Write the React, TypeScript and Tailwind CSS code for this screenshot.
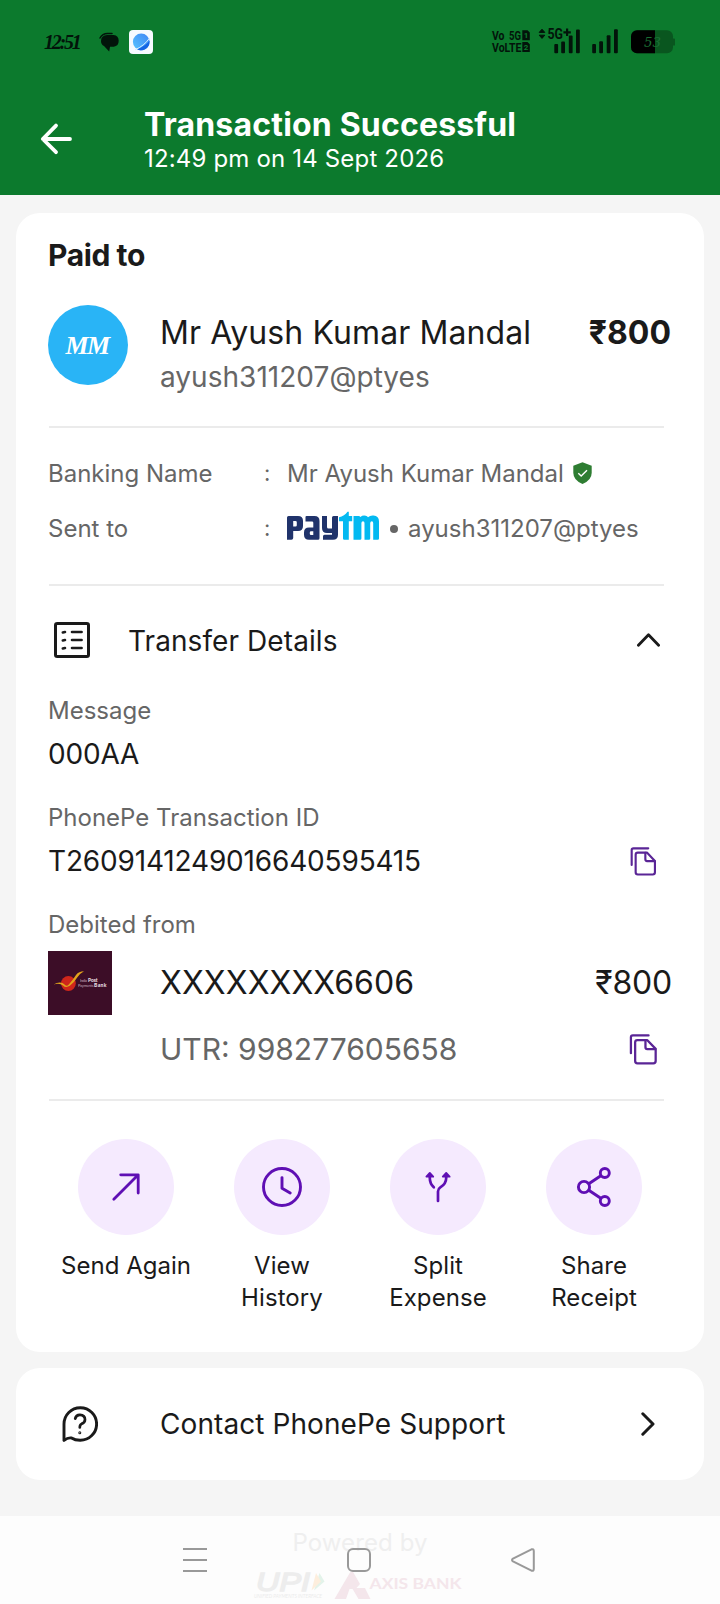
import type { ReactNode } from "react";

interface DetailProps {
  label: string;
  value: string;
  copyable?: boolean;
}

const actions = [
  { label: "Send Again", icon: <SendIcon /> },
  { label: "View History", icon: <HistoryIcon /> },
  { label: "Split Expense", icon: <SplitIcon /> },
  { label: "Share Receipt", icon: <ShareIcon /> },
];

function StatusIcons() {
  return (
    <svg className="overflow-visible" width="184" height="28" viewBox="0 0 184 28" fill="#02140a">
      <g fontFamily="Roboto, sans-serif" fontWeight="700" fontSize="13.5">
        <text x="0" y="12" textLength="12.5" lengthAdjust="spacingAndGlyphs">Vo</text>
        <text x="17" y="12" textLength="12" lengthAdjust="spacingAndGlyphs">5G</text>
        <text x="0" y="23.7" textLength="29.5" lengthAdjust="spacingAndGlyphs">VoLTE</text>
        <text x="55.5" y="10.8" fontSize="14.5" textLength="15.5" lengthAdjust="spacingAndGlyphs">5G</text>
      </g>
      <path d="M30.3 2.3h5.2l2.3 2.3v7.7h-7.500zM30.300 14h5.200l2.300 2.300v7.700h-7.500z" />
      <g fill="#0c7a2d" fontFamily="Roboto, sans-serif" fontWeight="700" fontSize="8">
        <text x="31.8" y="10.4">1</text>
        <text x="31.8" y="22">2</text>
      </g>
      <path d="M50 1.200l2.800 3.200h-5.600zM50 10.400l2.800-3.200h-5.600z" stroke="#02140a" strokeLinejoin="round" />
      <path d="M74 .6h2.200v2.600h2.600v2.200h-2.600V8H74V5.400h-2.600V3.200H74z" />
      <rect x="62.3" y="16" width="3.8" height="9.3" rx="1" />
      <rect x="69.2" y="13.5" width="3.8" height="11.800" rx="1" />
      <rect x="76.8" y="7.4" width="3.8" height="17.900" rx="1" />
      <rect x="84" y="1.4" width="3.8" height="23.900" rx="1" />
      <rect x="100.2" y="16" width="3.8" height="9.300" rx="1" />
      <rect x="107.2" y="13.3" width="3.8" height="12" rx="1" />
      <rect x="114.7" y="7.2" width="3.8" height="18.100" rx="1" />
      <rect x="122" y="1.2" width="3.8" height="24.100" rx="1" />
      <rect x="139" y="2.2" width="42" height="23" rx="6" fill="#09561f" />
      <path d="M181 10.400h1.200q.8 0 .8.900v5.400q0 .900-.8.900H181z" fill="#09561f" />
      <path d="M145 2.200h18v23h-18a6 6 0 0 1-6-6v-11a6 6 0 0 1 6-6z" fill="#000" />
      <text
        x="152"
        y="18.6"
        fill="#1b7034"
        fontFamily="'DejaVu Serif', serif"
        fontStyle="italic"
        fontSize="13.5"
        textLength="17"
        lengthAdjust="spacingAndGlyphs"
      >
        53
      </text>
    </svg>
  );
}

function CopyIcon({ size }: { size: number }) {
  return (
    <svg
      width={size}
      height={size}
      viewBox="0 0 29 32"
      fill="none"
      stroke="#5a2596"
      strokeWidth="2.2"
      strokeLinecap="round"
      strokeLinejoin="round"
    >
      <path d="M2.3 19.6V4.2q0-1.8 1.8-1.8h15.3" />
      <path d="M8.6 6.8h9.4l8.3 8.6v11.8q0 2.2-2.2 2.2H8.6q-2.2 0-2.2-2.2V9q0-2.2 2.2-2.2z" />
      <path d="M16.4 7v6.8q0 1.8 1.8 1.8h7.8" />
    </svg>
  );
}

function SendIcon() {
  return (
    <svg width="40" height="40" viewBox="0 0 40 40" fill="none" stroke="#5f0fb4" strokeWidth="2.8" strokeLinecap="round" strokeLinejoin="round">
      <path d="M7.8 32.2 32 8M14.7 7.8h17.5v18.2" />
    </svg>
  );
}

function HistoryIcon() {
  return (
    <svg width="40" height="40" viewBox="0 0 40 40" fill="none" stroke="#5f0fb4" strokeWidth="2.9" strokeLinecap="round" strokeLinejoin="round">
      <circle cx="20" cy="20" r="18.5" />
      <path d="M20 10.6v10.6l8.200 4.900" />
    </svg>
  );
}

function SplitIcon() {
  return (
    <svg width="40" height="40" viewBox="0 0 40 40" fill="none" stroke="#5f0fb4" strokeWidth="2.7" strokeLinecap="round" strokeLinejoin="round">
      <path d="M20 34v-9.6q0-2.6 2.3-4 5.900-3.600 5.900-9.400V8.600M11.800 8.600V11q0 5.600 4 9.300" />
      <path d="M11.800 5.900 8.400 9.700h6.800zM28.200 5.900l-3.400 3.800h6.800z" fill="#5f0fb4" strokeWidth="1.8" />
    </svg>
  );
}

function ShareIcon() {
  return (
    <svg width="40" height="40" viewBox="0 0 40 40" fill="none" stroke="#5f0fb4" strokeWidth="2.9">
      <circle cx="10" cy="20" r="5.600" />
      <circle cx="30.800" cy="6" r="4.500" />
      <circle cx="30.800" cy="34" r="4.500" />
      <path d="M14.800 16.800l12-8.100M14.800 23.200l12 8.100" />
    </svg>
  );
}

function Divider({ className }: { className: string }) {
  return <div className={`ml-px mr-2 h-0.5 bg-[#ebebeb] ${className}`} />;
}

function BankRow({ label, children }: { label: string; children: ReactNode }) {
  return (
    <div className="flex h-[55px] items-center text-2xl text-[#666]">
      <span className="w-[216px]">{label}</span>
      <span className="w-[23px] text-[22px]">:</span>
      {children}
    </div>
  );
}

function Detail({ label, value, copyable }: DetailProps) {
  return (
    <div className="mb-[21px]">
      <p className="text-2xl leading-8 text-[#666]">{label}</p>
      <div className="flex h-[54px] items-center justify-between pr-[13px]">
        <span className="text-[28px] tracking-[-0.17px] text-[#1a1a1a]">{value}</span>
        {copyable && <CopyIcon size={31} />}
      </div>
    </div>
  );
}

function PaytmLogo() {
  return (
    <svg width="93" height="30" viewBox="0 0 93 30" className="-mt-1.5">
      {/* p */}
      <path fill="#20336b" fillRule="evenodd" d="M0 6.5q0-1.5 1.5-1.5H11q5 0 5 5v5q0 5-5 5H6.2v7q0 1.8-1.8 1.8H0zM6.2 10v5.5h2.3q1.3 0 1.3-1.3v-2.900Q9.800 10 8.500 10z" />
      {/* a */}
      <path fill="#20336b" fillRule="evenodd" d="M19.500 5H27.500q5 0 5 5v17.300q0 1.500-1.500 1.500h-9q-5 0-5-5v-2.300q0-5 5-5h4.300v-4.700q0-1.300-1.300-1.300h-6.500V6q0-1 1-1zM24 20.200q-1.200 0-1.200 1.200v1.400q0 1.200 1.200 1.200h2.300v-3.800z" />
      {/* y */}
      <path fill="#20336b" d="M35 5h5v11q0 1.500 1.500 1.500h3.500V6.500q0-1.500 1.500-1.500h4.500v18.800q0 5-5 5H36v-3.500q0-1.500 1.500-1.500H45v-1.800h-5q-5 0-5-5z" />
      {/* tm */}
      <path fill="#03b9f1" d="M52 6.200Q57.500 5 60.500.7h1.300V5h3.400v5.200h-3.400v18.600h-4.500q-1.300 0-1.300-1.300V10.200h-4z" />
      <path fill="#03b9f1" d="M66.500 5h5.200q1.200 0 1.600 1 2.700-2 5.400-1.200 1.500.4 2.300 1.500Q83 4.300 86.500 4.600q5.500.6 5.500 6v16.900q0 1.300-1.300 1.300h-4.500V12q0-1.800-1.400-1.800T83.200 12v15.500q0 1.300-1.300 1.300h-4.400V12q0-1.800-1.500-1.800T74.400 12v15.500q0 1.300-1.300 1.300h-6.600z" />
    </svg>
  );
}

function BankLogo() {
  return (
    <svg width="64" height="64" viewBox="0 0 64 64">
      <rect width="64" height="64" fill="#3c0d27" />
      <circle cx="20.400" cy="32.500" r="7.400" fill="#cf261b" />
      <path d="M5.500 33.600q7-4.200 11.400.2 1.800 2 3.900-.3 4.300-5 7.200-9.600 2.800-3.500 8-3.600-4 2.100-6.600 6-3.800 6-7.600 8.500-4 2.400-6.800-.4-3.600-2.700-9.500-.8z" fill="#e2a41c" />
      <g fill="#e9dfe4" fontFamily="Lato, sans-serif">
        <text x="32" y="31.300" fontSize="4" textLength="7" opacity=".7">India</text>
        <text x="40" y="31.300" fontSize="4.800" fontWeight="900">Post</text>
        <text x="30" y="35.500" fontSize="4" textLength="15.500" opacity=".7">Payments</text>
        <text x="46" y="36.200" fontSize="5" fontWeight="900" textLength="12.500">Bank</text>
      </g>
    </svg>
  );
}

function PoweredBy() {
  return (
    <svg className="overflow-visible" width="208" height="30" viewBox="0 0 208 30">
      <text
        x="2"
        y="19.5"
        fill="#ededed"
        stroke="#ededed"
        strokeWidth="1.4"
        fontFamily="'Liberation Sans', sans-serif"
        fontStyle="italic"
        fontSize="25"
        textLength="54"
        lengthAdjust="spacingAndGlyphs"
      >
        UPI
      </text>
      <path d="M65.500 2l5 8.500L60 19.500z" fill="#e3f3ea" />
      <path d="M62 2l5 8.500L57.500 19.500z" fill="#fdeedd" />
      <text x="0" y="27" fill="#ececec" fontFamily="Lato, sans-serif" fontStyle="italic" fontSize="5" textLength="68" lengthAdjust="spacingAndGlyphs">
        UNIFIED PAYMENTS INTERFACE
      </text>
      <path d="M98.500 0l7.500 13-4.500 5h-6L92 28H80.500L96 1.500zM98 17h13l5.500 11h-12z" fill="#f4e6eb" />
      <text x="115.500" y="18" fill="#f4e6eb" fontFamily="Lato, sans-serif" fontWeight="700" fontSize="15.500" textLength="92" lengthAdjust="spacingAndGlyphs">
        AXIS BANK
      </text>
    </svg>
  );
}

export default function App() {
  return (
    <div className="h-[1604px] w-[720px] overflow-hidden bg-[#f5f5f5] font-['Inter',sans-serif] text-[#1a1a1a]">
      <header className="h-[195px] bg-[#0c7a2d] text-white">
        <div className="flex h-[84px] items-center justify-between px-11">
          <div className="flex items-center">
            <span className="w-[55px] font-['Liberation_Serif',serif] text-xl font-semibold italic tracking-[-2.2px] text-[#02140a]">
              12:51
            </span>
            <svg width="20" height="20" viewBox="0 0 20 20" fill="#02140a">
              <path d="M1 6Q3.500 1.600 8.500 1.500h4.500" fill="none" stroke="#02140a" strokeWidth="1.500" strokeLinecap="round" />
              <path d="M8 3h6.500q5.200.5 5.200 5.700 0 5.300-5 6H11l-.8 4.800L5 14Q2 12.500 2 9q0-5.500 6-6z" />
            </svg>
            <svg className="ml-[10px]" width="24" height="24" viewBox="0 0 24 24">
              <defs>
                <linearGradient id="planet" x1="0" y1="1" x2="1" y2="0">
                  <stop offset="0" stopColor="#58c4ff" />
                  <stop offset="1" stopColor="#3f86f4" />
                </linearGradient>
              </defs>
              <rect width="24" height="24" rx="4" fill="#f6faff" />
              <circle cx="12.200" cy="11.800" r="8.300" fill="url(#planet)" />
              <path d="M8 19.600Q17 15.500 20.600 10.500 21 17 15.800 19.500q-4 1.700-7.800.1z" fill="#1465e4" />
              <path d="M6 19.800Q15 16 20.600 8" fill="none" stroke="#d8efff" strokeWidth="1" />
            </svg>
          </div>
          <StatusIcons />
        </div>
        <div className="flex items-start pl-10 pt-[22px]">
          <svg className="mt-4" width="34" height="34" viewBox="0 0 34 34" fill="none" stroke="#fff" strokeWidth="3.800" strokeLinecap="round" strokeLinejoin="round">
            <path d="M30 17H3M16 3.600 2.800 17 16 30.200" />
          </svg>
          <div className="ml-[70px]">
            <h1 className="text-[32px] font-bold leading-[38px] tracking-[0.18px]">Transaction Successful</h1>
            <p className="-mt-px text-2xl leading-8 tracking-[0.17px]">12:49 pm on 14 Sept 2026</p>
          </div>
        </div>
      </header>

      <main>
        <section className="mx-4 mt-[18px] h-[1139px] rounded-3xl bg-white px-8 pt-6">
          <h2 className="text-[30px] font-bold leading-9 tracking-[-0.4px]">Paid to</h2>

          <div className="mt-8 flex h-20 items-start">
            <div className="flex size-20 items-center justify-center rounded-full bg-[#29b4f6]">
              <span className="mr-0.5 font-['Liberation_Serif',serif] text-[26px] font-bold italic tracking-[-1.5px] text-white">
                MM
              </span>
            </div>
            <div className="ml-8 flex-1 pt-[5px]">
              <div className="flex justify-between pr-px text-[32px] leading-[46px]">
                <span className="tracking-[0.1px]">Mr Ayush Kumar Mandal</span>
                <span className="font-bold">₹800</span>
              </div>
              <p className="-mt-px text-[28px] leading-[44px] tracking-[0.03px] text-[#666]">ayush311207@ptyes</p>
            </div>
          </div>

          <Divider className="mb-[18px] mt-[41px]" />

          <BankRow label="Banking Name">
            <span>Mr Ayush Kumar Mandal</span>
            <svg className="-mt-0.5 ml-[9px]" width="19" height="22" viewBox="0 0 19 22">
              <path d="M9.500.2 18.700 3.700v7q0 7.500-9.200 11.200Q.3 18.200.3 10.700v-7z" fill="#2e7d32" />
              <path d="M5.300 11.200l2.900 2.800 5.800-5.800" fill="none" stroke="#fff" strokeWidth="1.400" />
            </svg>
          </BankRow>
          <BankRow label="Sent to">
            <PaytmLogo />
            <span className="ml-[10px] size-2 rounded-full bg-[#666]" />
            <span className="ml-[10px]">ayush311207@ptyes</span>
          </BankRow>

          <Divider className="mt-7" />

          <div className="flex h-[109px] items-center pl-1.5 pr-3">
            <svg className="-mt-px" width="36" height="36" viewBox="0 0 36 36" fill="none" stroke="#1a1a1a" strokeWidth="3" strokeLinecap="round">
              <rect x="1.500" y="1.500" width="33" height="33" rx="1.800" />
              <path d="M8.800 10.500 11 10M18 10h9.600M8.800 18.500 11 18M18 18h9.600M8.800 26.500 11 26M18 26h9.600" strokeWidth="2.600" />
            </svg>
            <span className="ml-[38px] flex-1 text-[28px] tracking-[0.08px]">Transfer Details</span>
            <svg className="-mt-0.5" width="23" height="14" viewBox="0 0 23 14" fill="none" stroke="#1a1a1a" strokeWidth="2.800" strokeLinecap="round" strokeLinejoin="round">
              <path d="M1.400 12.300 11.500 1.700l10.100 10.600" />
            </svg>
          </div>

          <Detail label="Message" value="000AA" />
          <Detail label="PhonePe Transaction ID" value="T2609141249016640595415" copyable />

          <p className="text-2xl leading-8 text-[#666]">Debited from</p>
          <div className="mt-[10px] flex">
            <BankLogo />
            <div className="ml-12 flex-1">
              <div className="flex h-[62px] items-center justify-between pt-0.5 text-[32px]">
                <span className="tracking-[0.08px]">XXXXXXXX6606</span>
                <span className="tracking-[-0.2px]">₹800</span>
              </div>
              <div className="flex h-[72px] items-center justify-between pr-3">
                <span className="text-[30px] text-[#666]">UTR: 998277605658</span>
                <CopyIcon size={33} />
              </div>
            </div>
          </div>

          <Divider className="mt-[14px]" />

          <div className="mt-[38px] grid grid-cols-4">
            {actions.map((action) => (
              <button key={action.label} className="flex flex-col items-center">
                <span className="flex size-24 items-center justify-center rounded-full bg-[#f5eafe]">{action.icon}</span>
                <span
                  className={
                    action.label === "Send Again"
                      ? "mt-[15px] text-2xl leading-8"
                      : "mt-[15px] w-28 text-2xl leading-8 tracking-[0.08px]"
                  }
                >
                  {action.label}
                </span>
              </button>
            ))}
          </div>
        </section>

        <section className="mx-4 mt-4 flex h-28 items-center rounded-3xl bg-white pl-[46px] pr-[49px]">
          <svg width="36" height="36" viewBox="0 0 36 36" fill="none" stroke="#1a1a1a" strokeWidth="2.900" strokeLinecap="round" strokeLinejoin="round">
            <path d="M2 34.400V18A16.300 16.300 0 1 1 18.200 34.300Q13 34.300 9.500 32 6 31.300 2 34.400z" />
            <path d="M13.200 12.600Q14 8.800 18 8.900q5 .2 5 4.700 0 3.300-3.500 4.300-1.700.6-1.700 3.600" strokeWidth="2.700" />
            <circle cx="17.800" cy="26.800" r=".5" strokeWidth="2" />
          </svg>
          <span className="ml-[62px] flex-1 text-[28px] tracking-[0.08px]">Contact PhonePe Support</span>
          <svg width="14" height="24" viewBox="0 0 14 24" fill="none" stroke="#1a1a1a" strokeWidth="3" strokeLinecap="round" strokeLinejoin="round">
            <path d="M1.800 1.800 12 12 1.800 22.200" />
          </svg>
        </section>
      </main>

      <footer className="relative mt-9 h-[88px] bg-[#fdfdfd]">
        <p className="pt-[11px] text-center text-2xl leading-8 tracking-[0.1px] text-[#efefef]">Powered by</p>
        <div className="flex justify-center pr-1 pt-3">
          <PoweredBy />
        </div>
        {/* system navigation sits over the page footer */}
        <nav className="absolute inset-0 flex items-center justify-between pl-[183px] pr-[185px]">
          <svg width="24" height="24" viewBox="0 0 24 24" stroke="#999" strokeWidth="2">
            <path d="M0 1h24M0 12h24M0 23h24" />
          </svg>
          <svg width="24" height="24" viewBox="0 0 24 24" fill="none" stroke="#999" strokeWidth="2">
            <rect x="1" y="1" width="22" height="22" rx="5" />
          </svg>
          <svg width="24" height="24" viewBox="0 0 24 24" fill="none" stroke="#999" strokeWidth="2" strokeLinejoin="round">
            <path d="M20.500 1.300 2 10.600q-2 1.400 0 2.800l18.500 9.300q2.200.6 2.300-1.700V3q-.1-2.300-2.300-1.700z" />
          </svg>
        </nav>
      </footer>
    </div>
  );
}
